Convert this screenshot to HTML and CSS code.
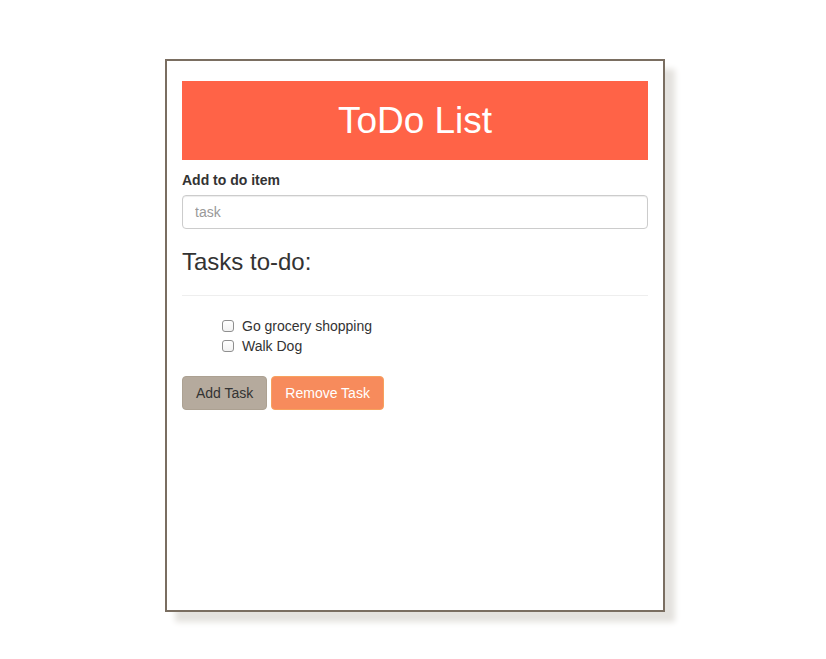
FILE: index.html
```html
<!DOCTYPE html>
<html>
<head>
<meta charset="utf-8">
<link rel="stylesheet" href="styles.css">
</head>
<body>
<div class="card">
  <div class="banner">ToDo List</div>
  <label class="field-label">Add to do item</label>
  <input class="task-input" type="text" placeholder="task">
  <h3 class="section-title">Tasks to-do:</h3>
  <hr class="divider">
  <ul class="task-list">
    <li><input type="checkbox" class="check"><span>Go grocery shopping</span></li>
    <li><input type="checkbox" class="check"><span>Walk Dog</span></li>
  </ul>
  <div class="actions">
    <button class="btn btn-add">Add Task</button>
    <button class="btn btn-remove">Remove Task</button>
  </div>
</div>
</body>
</html>
```
FILE: styles.css
```css
html, body {
  margin: 0;
  padding: 0;
  background: #fff;
}
body {
  font-family: "Liberation Sans", Arial, Helvetica, sans-serif;
  font-size: 14px;
  line-height: 20px;
  color: #333;
  padding: 59px 0 48px 165px;
}
.card {
  box-sizing: border-box;
  width: 500px;
  height: 553px;
  border: 2px solid #7a6e61;
  padding: 20px 15px 0 15px;
  background: #fff;
  box-shadow: 10px 10px 6px #e4e2de;
  display: flex;
  flex-direction: column;
}
.banner {
  background: #ff6347;
  color: #fff;
  height: 79px;
  font-size: 37px;
  display: flex;
  align-items: center;
  justify-content: center;
  padding-top: 1px;
  box-sizing: border-box;
}
.field-label {
  display: block;
  font-weight: bold;
  margin-top: 10px;
  margin-bottom: 5px;
  line-height: 20px;
}
.task-input {
  box-sizing: border-box;
  width: 100%;
  height: 34px;
  padding: 6px 12px;
  font-family: inherit;
  font-size: 14px;
  color: #555;
  border: 1px solid #ccc;
  border-radius: 4px;
  box-shadow: inset 0 1px 1px rgba(0,0,0,0.075);
  outline: none;
  margin: 0;
}
.task-input::placeholder {
  color: #999;
}
.section-title {
  font-size: 24px;
  font-weight: normal;
  line-height: 26px;
  margin: 20px 0 20px;
  color: #333;
}
.divider {
  border: 0;
  border-top: 1px solid #eee;
  margin: 0 0 20px;
}
.task-list {
  list-style: none;
  margin: 0 0 20px;
  padding: 0 0 0 40px;
}
.task-list li {
  display: flex;
  align-items: center;
  height: 20px;
}
.check {
  appearance: none;
  -webkit-appearance: none;
  width: 12px;
  height: 12px;
  margin: 0 8px 0 0;
  border: 1px solid #8f8f8f;
  border-radius: 3px;
  background: linear-gradient(#fff, #f2f2f2);
  box-sizing: border-box;
}
.actions {
  display: flex;
  gap: 4px;
}
.btn {
  font-family: inherit;
  font-size: 14px;
  line-height: 20px;
  padding: 6px 13px;
  border-radius: 4px;
  border: 1px solid transparent;
  height: 34px;
  box-sizing: border-box;
  cursor: pointer;
}
.btn-add {
  background: #b5aa9d;
  border-color: #aca192;
  color: #333;
}
.btn-remove {
  background: #f78b5c;
  border-color: #f7a15e;
  color: #fff;
}
```
